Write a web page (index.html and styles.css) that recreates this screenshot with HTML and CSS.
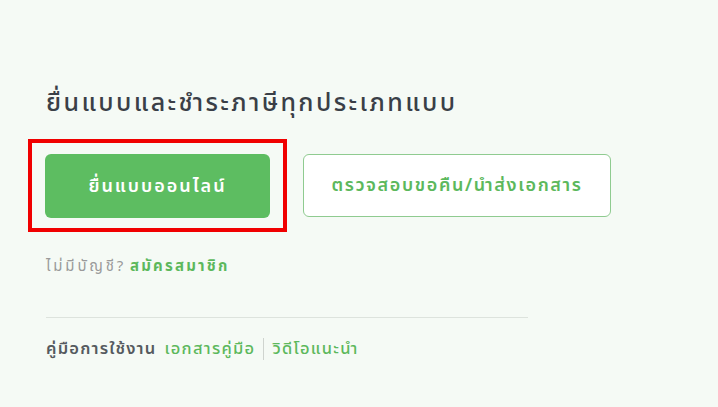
FILE: index.html
```html
<!DOCTYPE html>
<html lang="th">
<head>
<meta charset="utf-8">
<link rel="stylesheet" href="styles.css">
</head>
<body>
<main class="panel">
  <h1 class="title">ยื่นแบบและชำระภาษีทุกประเภทแบบ</h1>
  <div class="actions">
    <div class="highlight">
      <a class="btn btn-primary" href="#">ยื่นแบบออนไลน์</a>
    </div>
    <a class="btn btn-outline" href="#">ตรวจสอบขอคืน/นำส่งเอกสาร</a>
  </div>
  <p class="signup"><span class="muted">ไม่มีบัญชี?</span> <a class="link-strong" href="#">สมัครสมาชิก</a></p>
  <hr class="divider">
  <p class="guide">
    <span class="guide-label">คู่มือการใช้งาน</span>
    <a class="link" href="#">เอกสารคู่มือ</a>
    <span class="sep"></span>
    <a class="link" href="#">วิดีโอแนะนำ</a>
  </p>
</main>
</body>
</html>
```

FILE: styles.css
```css
html, body {
  margin: 0;
  padding: 0;
  background: #f5faf5;
  height: 100%;
}
body {
  font-family: "Noto Sans Thai", "Noto Sans", "DejaVu Sans", sans-serif;
  color: #3b4047;
}
.panel {
  padding: 86px 0 0 46px;
  width: 482px;
}
.title {
  margin: 0;
  font-size: 25px;
  font-weight: 500;
  line-height: 34px;
  color: #3a3f47;
  letter-spacing: 2.4px;
  white-space: nowrap;
}
.actions {
  display: flex;
  align-items: center;
  margin-top: 19px;
  margin-left: -18px;
}
.highlight {
  flex-shrink: 0;
  border: 4px solid #f00000;
  padding: 11px 13px 10px 13px;
}
.btn {
  flex-shrink: 0;
  display: flex;
  align-items: center;
  justify-content: center;
  box-sizing: border-box;
  height: 64px;
  border-radius: 6px;
  text-decoration: none;
  font-size: 18px;
  font-weight: 600;
  white-space: nowrap;
}
.btn-primary {
  width: 225px;
  background: #5dbd61;
  color: #ffffff;
  letter-spacing: 2px;
}
.btn-outline {
  width: 308px;
  height: 63px;
  margin-left: 16px;
  background: #ffffff;
  border: 1.5px solid #8fcb90;
  color: #5cb85c;
  letter-spacing: 1.6px;
}
.signup {
  margin: 25px 0 0 0;
  font-size: 15px;
  line-height: 20px;
  white-space: nowrap;
}
.muted {
  color: #9a9a9a;
  letter-spacing: 2.8px;
}
.link-strong {
  color: #5cb85c;
  font-weight: 700;
  text-decoration: none;
  letter-spacing: 2.2px;
}
.divider {
  margin: 40px 0 0 0;
  border: 0;
  border-top: 1px solid #dde3dd;
  height: 0;
}
.guide {
  margin: 19px 0 0 0;
  display: flex;
  align-items: center;
  font-size: 16.5px;
  line-height: 24px;
  white-space: nowrap;
}
.guide-label {
  color: #555a5f;
  font-weight: 600;
  letter-spacing: 1.2px;
}
.link {
  color: #5cb85c;
  text-decoration: none;
  font-weight: 500;
  margin-left: 8px;
  letter-spacing: 1.3px;
}
.sep {
  display: inline-block;
  width: 1px;
  height: 22px;
  background: #cfd4cf;
  margin-left: 8px;
}
```
